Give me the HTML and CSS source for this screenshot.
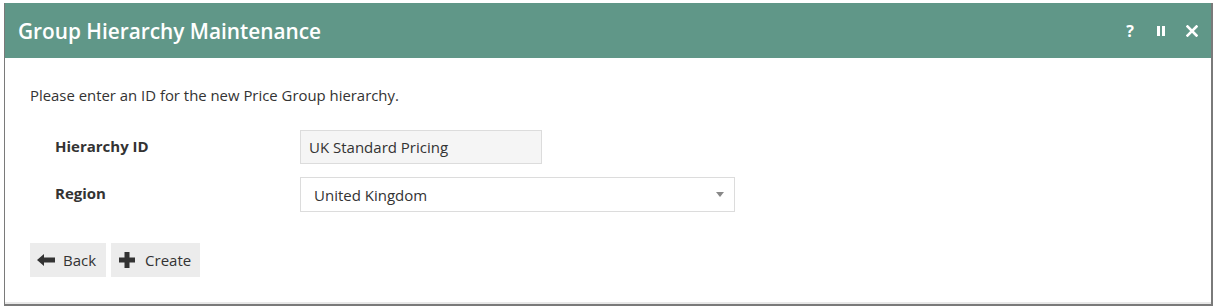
FILE: index.html
```html
<!DOCTYPE html>
<html>
<head>
<meta charset="utf-8">
<link rel="stylesheet" href="styles.css">
</head>
<body>
<div class="page">
  <div class="dialog">
    <div class="header">
      <h1 class="title">Group Hierarchy Maintenance</h1>
      <div class="tools">
        <span class="tool help">?</span>
        <span class="tool">
          <svg width="10" height="12" viewBox="0 0 10 12"><rect x="1" y="1" width="3" height="10" fill="#fff"/><rect x="6" y="1" width="3" height="10" fill="#fff"/></svg>
        </span>
        <span class="tool">
          <svg width="12" height="12" viewBox="0 0 12 12"><path d="M1.5 1.5 L10.5 10.5 M10.5 1.5 L1.5 10.5" stroke="#fff" stroke-width="2.6" stroke-linecap="square"/></svg>
        </span>
      </div>
    </div>
    <div class="body">
      <p class="intro">Please enter an ID for the new Price Group hierarchy.</p>
      <div class="form">
        <div class="row">
          <label class="label">Hierarchy ID</label>
          <div class="input">UK Standard Pricing</div>
        </div>
        <div class="row">
          <label class="label">Region</label>
          <div class="select">
            <span>United Kingdom</span>
            <span class="caret"></span>
          </div>
        </div>
      </div>
      <div class="buttons">
        <button class="btn">
          <svg width="18" height="14" viewBox="0 0 18 14"><path d="M0 7 L7 1 L7 4.5 L18 4.5 L18 9.5 L7 9.5 L7 13 Z" fill="#333"/></svg>
          Back
        </button>
        <button class="btn btn-create">
          <svg width="16" height="16" viewBox="0 0 16 16"><path d="M5.5 0 H10.5 V5.5 H16 V10.5 H10.5 V16 H5.5 V10.5 H0 V5.5 H5.5 Z" fill="#333"/></svg>
          Create
        </button>
      </div>
    </div>
  </div>
</div>
</body>
</html>
```

FILE: styles.css
```css
* { box-sizing: border-box; }
html, body { margin: 0; padding: 0; background: #fff; }
body { font-family: "Open Sans", "Noto Sans", sans-serif; color: #333; }
.page { padding: 3px 0 0 4px; width: 1213px; }
.dialog {
  border-left: 1px solid #7a7a7a;
  border-right: 2px solid #7a7a7a;
  border-bottom: 2px solid #7a7a7a;
  height: 303px;
  display: flex;
  flex-direction: column;
  background: #fff;
}
.header {
  background: #609788;
  height: 55px;
  display: flex;
  align-items: center;
  justify-content: space-between;
  padding: 0 12px 0 13px;
}
.title {
  margin: 0;
  font-size: 20.8px;
  font-weight: 600;
  color: #fff;
}
.tools { display: flex; align-items: center; gap: 17px; }
.tool { color: #fff; font-weight: 700; font-size: 16px; display: flex; align-items: center; width: 14px; justify-content: center; }
.body {
  flex: 1;
  padding: 0 0 0 25px;
  border-bottom: 2px solid #e8e8e8;
}
.intro { margin: 26px 0 0; font-size: 14.9px; line-height: 22px; }
.form { margin-top: 24px; padding-left: 25px; display: flex; flex-direction: column; gap: 13px; }
.row { display: flex; align-items: center; }
.label { width: 245px; font-weight: 700; font-size: 15px; padding-bottom: 3px; }
.input {
  width: 242px; height: 34px;
  background: #f5f5f5; border: 1px solid #dcdcdc;
  font-size: 15px; line-height: 32px; padding-left: 8px;
}
.select {
  width: 435px; height: 35px;
  background: #fff; border: 1px solid #dcdcdc;
  font-size: 15px; display: flex; align-items: center; justify-content: space-between;
  padding: 0 10px 0 13px;
}
.caret { width: 0; height: 0; border-left: 4px solid transparent; border-right: 4px solid transparent; border-top: 5px solid #888; }
.buttons { margin-top: 31px; display: flex; gap: 5px; }
.btn {
  height: 34px; background: #ececec; border: none; border-radius: 0;
  font-family: "Open Sans", "Noto Sans", sans-serif; font-size: 15px; color: #333;
  display: flex; align-items: center; gap: 8px; padding: 0 10px 0 7px;
}
.btn-create { gap: 10px; padding: 0 9px 0 8px; }
```
